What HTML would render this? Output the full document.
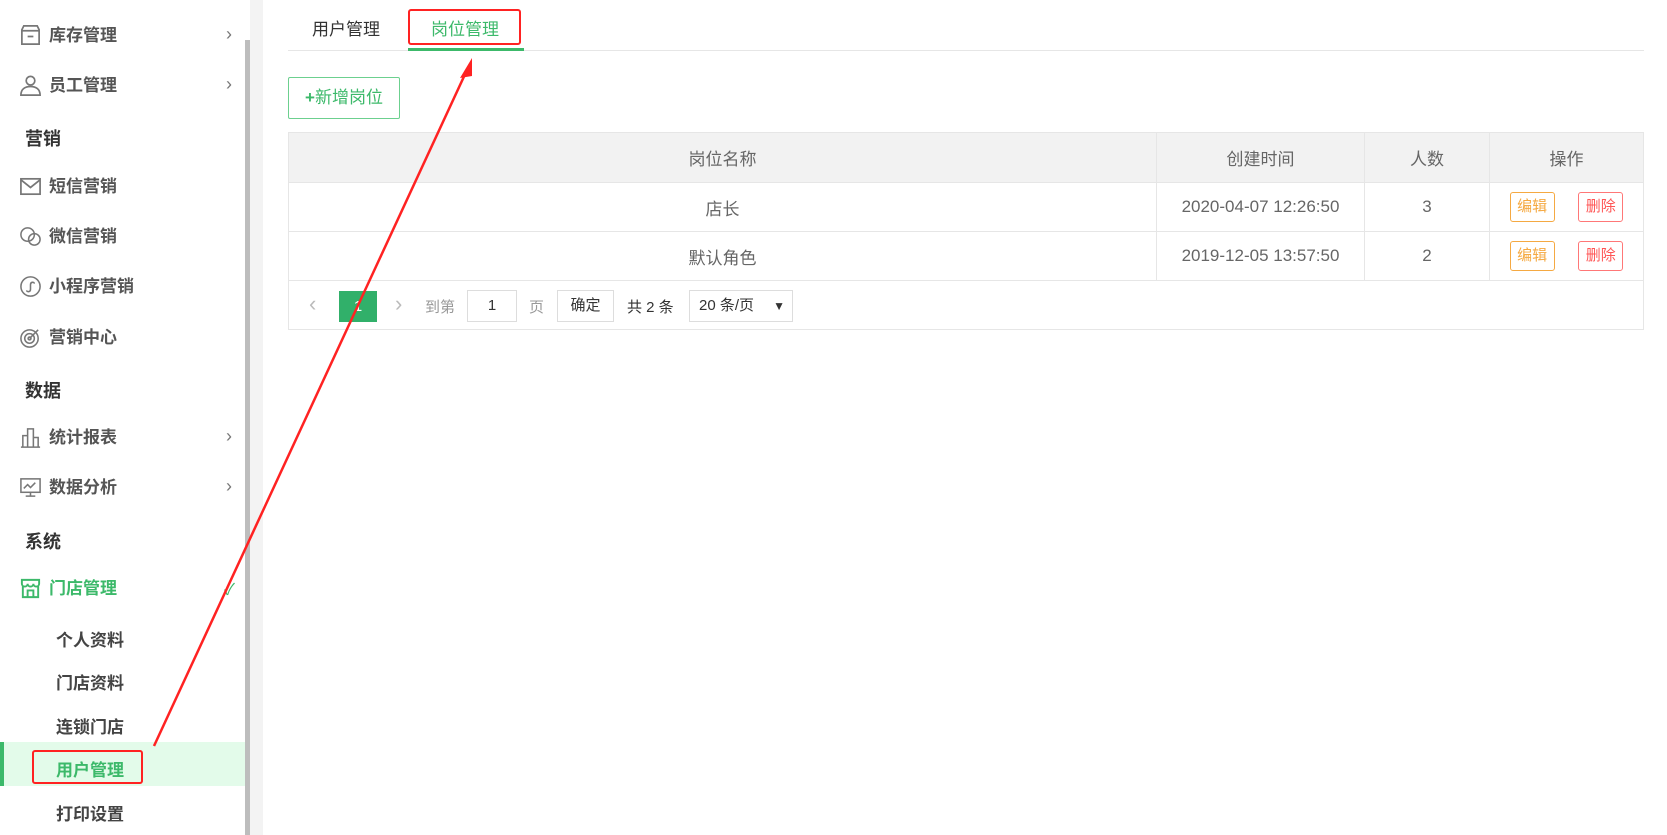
<!DOCTYPE html>
<html><head><meta charset="utf-8"><style>
*{margin:0;padding:0;box-sizing:border-box}
body{width:1667px;height:835px;overflow:hidden;background:#fff;font-family:"Liberation Sans","Noto Sans CJK SC",sans-serif;position:relative;color:#333}
.sb{position:absolute;left:0;top:0;width:245px;height:835px;background:#fff}
.bar{position:absolute;left:245px;top:40px;width:5px;height:795px;background:#bdbdbd}
.strip{position:absolute;left:250px;top:0;width:13px;height:835px;background:#f3f3f3}
.it{position:absolute;left:49px;font-size:17px;font-weight:bold;color:#555;line-height:20px}
.ic{position:absolute;left:19px;width:23px;height:23px}
.hd{position:absolute;left:25px;font-size:18px;font-weight:bold;color:#333}
.sub{position:absolute;left:56px;font-size:17px;font-weight:bold;color:#444}
.ar{position:absolute;left:226px;font-size:18px;color:#777}
.abs{position:absolute}
td,th{border:1px solid #e6e6e6;text-align:center;font-size:17px;color:#666;font-weight:normal;vertical-align:middle}
.btn{display:inline-block;vertical-align:middle;width:45px;height:30px;line-height:28px;font-size:15px;border:1px solid;border-radius:3px}
</style></head><body>
<div class="sb">
<svg class="ic" style="top:24px" viewBox="0 0 24 24" fill="none" stroke="#777" stroke-width="1.8"><path d="M3 6l2-4h14l2 4v15H3z M3 7h18 M9 13h6"/></svg>
<div class="it" style="top:26px">库存管理</div><div class="ar" style="top:24px">›</div>
<svg class="ic" style="top:74px" viewBox="0 0 24 24" fill="none" stroke="#777" stroke-width="1.8"><circle cx="12" cy="7" r="4.5"/><path d="M2 22c0-6 4-9 10-9s10 3 10 9z"/></svg>
<div class="it" style="top:76px">员工管理</div><div class="ar" style="top:74px">›</div>
<div class="hd" style="top:125px">营销</div>
<svg class="ic" style="top:175px" viewBox="0 0 24 24" fill="none" stroke="#777" stroke-width="1.8"><rect x="2" y="4" width="20" height="16"/><path d="M2 5l10 8 10-8"/></svg>
<div class="it" style="top:177px">短信营销</div>
<svg class="ic" style="top:225px" viewBox="0 0 24 24" fill="none" stroke="#777" stroke-width="1.6"><circle cx="9" cy="10" r="7"/><circle cx="16" cy="15" r="6"/></svg>
<div class="it" style="top:227px">微信营销</div>
<svg class="ic" style="top:275px" viewBox="0 0 24 24" fill="none" stroke="#777" stroke-width="1.6"><circle cx="12" cy="12" r="10"/><path d="M8 16c0 2 4 2 4-1v-5c0-3 4-3 4-1"/></svg>
<div class="it" style="top:277px">小程序营销</div>
<svg class="ic" style="top:326px" viewBox="0 0 24 24" fill="none" stroke="#777" stroke-width="1.6"><circle cx="11" cy="13" r="9"/><circle cx="11" cy="13" r="5"/><circle cx="11" cy="13" r="1.5"/><path d="M11 13l9-9"/></svg>
<div class="it" style="top:328px">营销中心</div>
<div class="hd" style="top:377px">数据</div>
<svg class="ic" style="top:426px" viewBox="0 0 24 24" fill="none" stroke="#777" stroke-width="1.6"><path d="M2 22h20 M4 22V10h5v12 M9 22V3h6v19 M15 22V12h5v10"/></svg>
<div class="it" style="top:428px">统计报表</div><div class="ar" style="top:426px">›</div>
<svg class="ic" style="top:476px" viewBox="0 0 24 24" fill="none" stroke="#777" stroke-width="1.6"><rect x="2" y="3" width="20" height="14"/><path d="M5 13l4-4 3 3 5-5 M12 17v4 M7 21h10"/></svg>
<div class="it" style="top:478px">数据分析</div><div class="ar" style="top:476px">›</div>
<div class="hd" style="top:528px">系统</div>
<svg class="ic" style="top:577px" viewBox="0 0 24 24" fill="none" stroke="#3cb96a" stroke-width="2"><path d="M3 3h18v4a3 3 0 01-6 0 3 3 0 01-6 0 3 3 0 01-6 0z M4 9v12h16V9 M9 21v-7h6v7"/></svg>
<div class="it" style="top:579px;color:#3cb96a">门店管理</div><div class="abs" style="left:224px;top:576px;color:#3cb96a;font-size:16px">✓</div>
<div class="sub" style="top:626px">个人资料</div>
<div class="sub" style="top:669px">门店资料</div>
<div class="sub" style="top:713px">连锁门店</div>
<div class="abs" style="left:0;top:742px;width:245px;height:44px;background:#e3fbea"></div>
<div class="abs" style="left:0;top:742px;width:4px;height:44px;background:#3cb96a"></div>
<div class="sub" style="top:756px;color:#3cb96a">用户管理</div>
<div class="sub" style="top:800px">打印设置</div>
</div>
<div class="bar"></div><div class="strip"></div>

<div class="abs" style="left:312px;top:15px;font-size:17px;color:#333">用户管理</div>
<div class="abs" style="left:431px;top:15px;font-size:17px;color:#3cb96a">岗位管理</div>
<div class="abs" style="left:288px;top:50px;width:1356px;height:1px;background:#e6e6e6"></div>
<div class="abs" style="left:408px;top:48px;width:116px;height:3px;background:#3cb96a"></div>

<div class="abs" style="left:288px;top:77px;width:112px;height:42px;border:1px solid #6cd08f;border-radius:2px;color:#3cb96a;font-size:17px;line-height:40px;text-align:center"><b>+</b>新增岗位</div>

<table class="abs" style="left:288px;top:132px;width:1356px;border-collapse:collapse">
<tr style="height:50px;background:#f2f2f2"><th style="width:868px">岗位名称</th><th style="width:208px">创建时间</th><th style="width:125px">人数</th><th>操作</th></tr>
<tr style="height:49px"><td>店长</td><td>2020-04-07 12:26:50</td><td>3</td><td><span class="btn" style="border-color:#f5a942;color:#f5a942">编辑</span>&nbsp;&nbsp;&nbsp;&nbsp; <span class="btn" style="border-color:#f77;color:#f55">删除</span></td></tr>
<tr style="height:49px"><td>默认角色</td><td>2019-12-05 13:57:50</td><td>2</td><td><span class="btn" style="border-color:#f5a942;color:#f5a942">编辑</span>&nbsp;&nbsp;&nbsp;&nbsp; <span class="btn" style="border-color:#f77;color:#f55">删除</span></td></tr>
<tr style="height:49px"><td colspan="4" style="position:relative;text-align:left">
<span class="abs" style="left:20px;top:10px;color:#bbb;font-size:22px">‹</span>
<span class="abs" style="left:50px;top:10px;width:38px;height:31px;background:#31b06a;color:#fff;text-align:center;line-height:31px;font-size:15px">1</span>
<span class="abs" style="left:106px;top:10px;color:#bbb;font-size:22px">›</span>
<span class="abs" style="left:136px;top:15px;color:#999;font-size:15px">到第</span>
<span class="abs" style="left:178px;top:9px;width:50px;height:32px;border:1px solid #ddd;text-align:center;line-height:30px;font-size:15px;color:#333">1</span>
<span class="abs" style="left:240px;top:15px;color:#999;font-size:15px">页</span>
<span class="abs" style="left:268px;top:9px;width:57px;height:32px;border:1px solid #ddd;text-align:center;line-height:30px;font-size:15px;color:#333">确定</span>
<span class="abs" style="left:338px;top:15px;color:#333;font-size:15px">共 2 条</span>
<span class="abs" style="left:400px;top:9px;width:104px;height:32px;border:1px solid #ddd;line-height:30px;font-size:15px;color:#333;padding-left:9px">20 条/页<span style="position:absolute;right:7px;font-size:12px">▼</span></span>
</td></tr>
</table>

<div class="abs" style="left:408px;top:9px;width:113px;height:36px;border:2px solid #f22;border-radius:3px"></div>
<div class="abs" style="left:32px;top:750px;width:111px;height:34px;border:2px solid #f22;border-radius:3px"></div>
<svg class="abs" style="left:0;top:0" width="1667" height="835"><line x1="154" y1="746" x2="467" y2="70" stroke="#f22" stroke-width="2.5"/><polygon points="472,58 460,78 472,76" fill="#f22"/></svg>
</body></html>
